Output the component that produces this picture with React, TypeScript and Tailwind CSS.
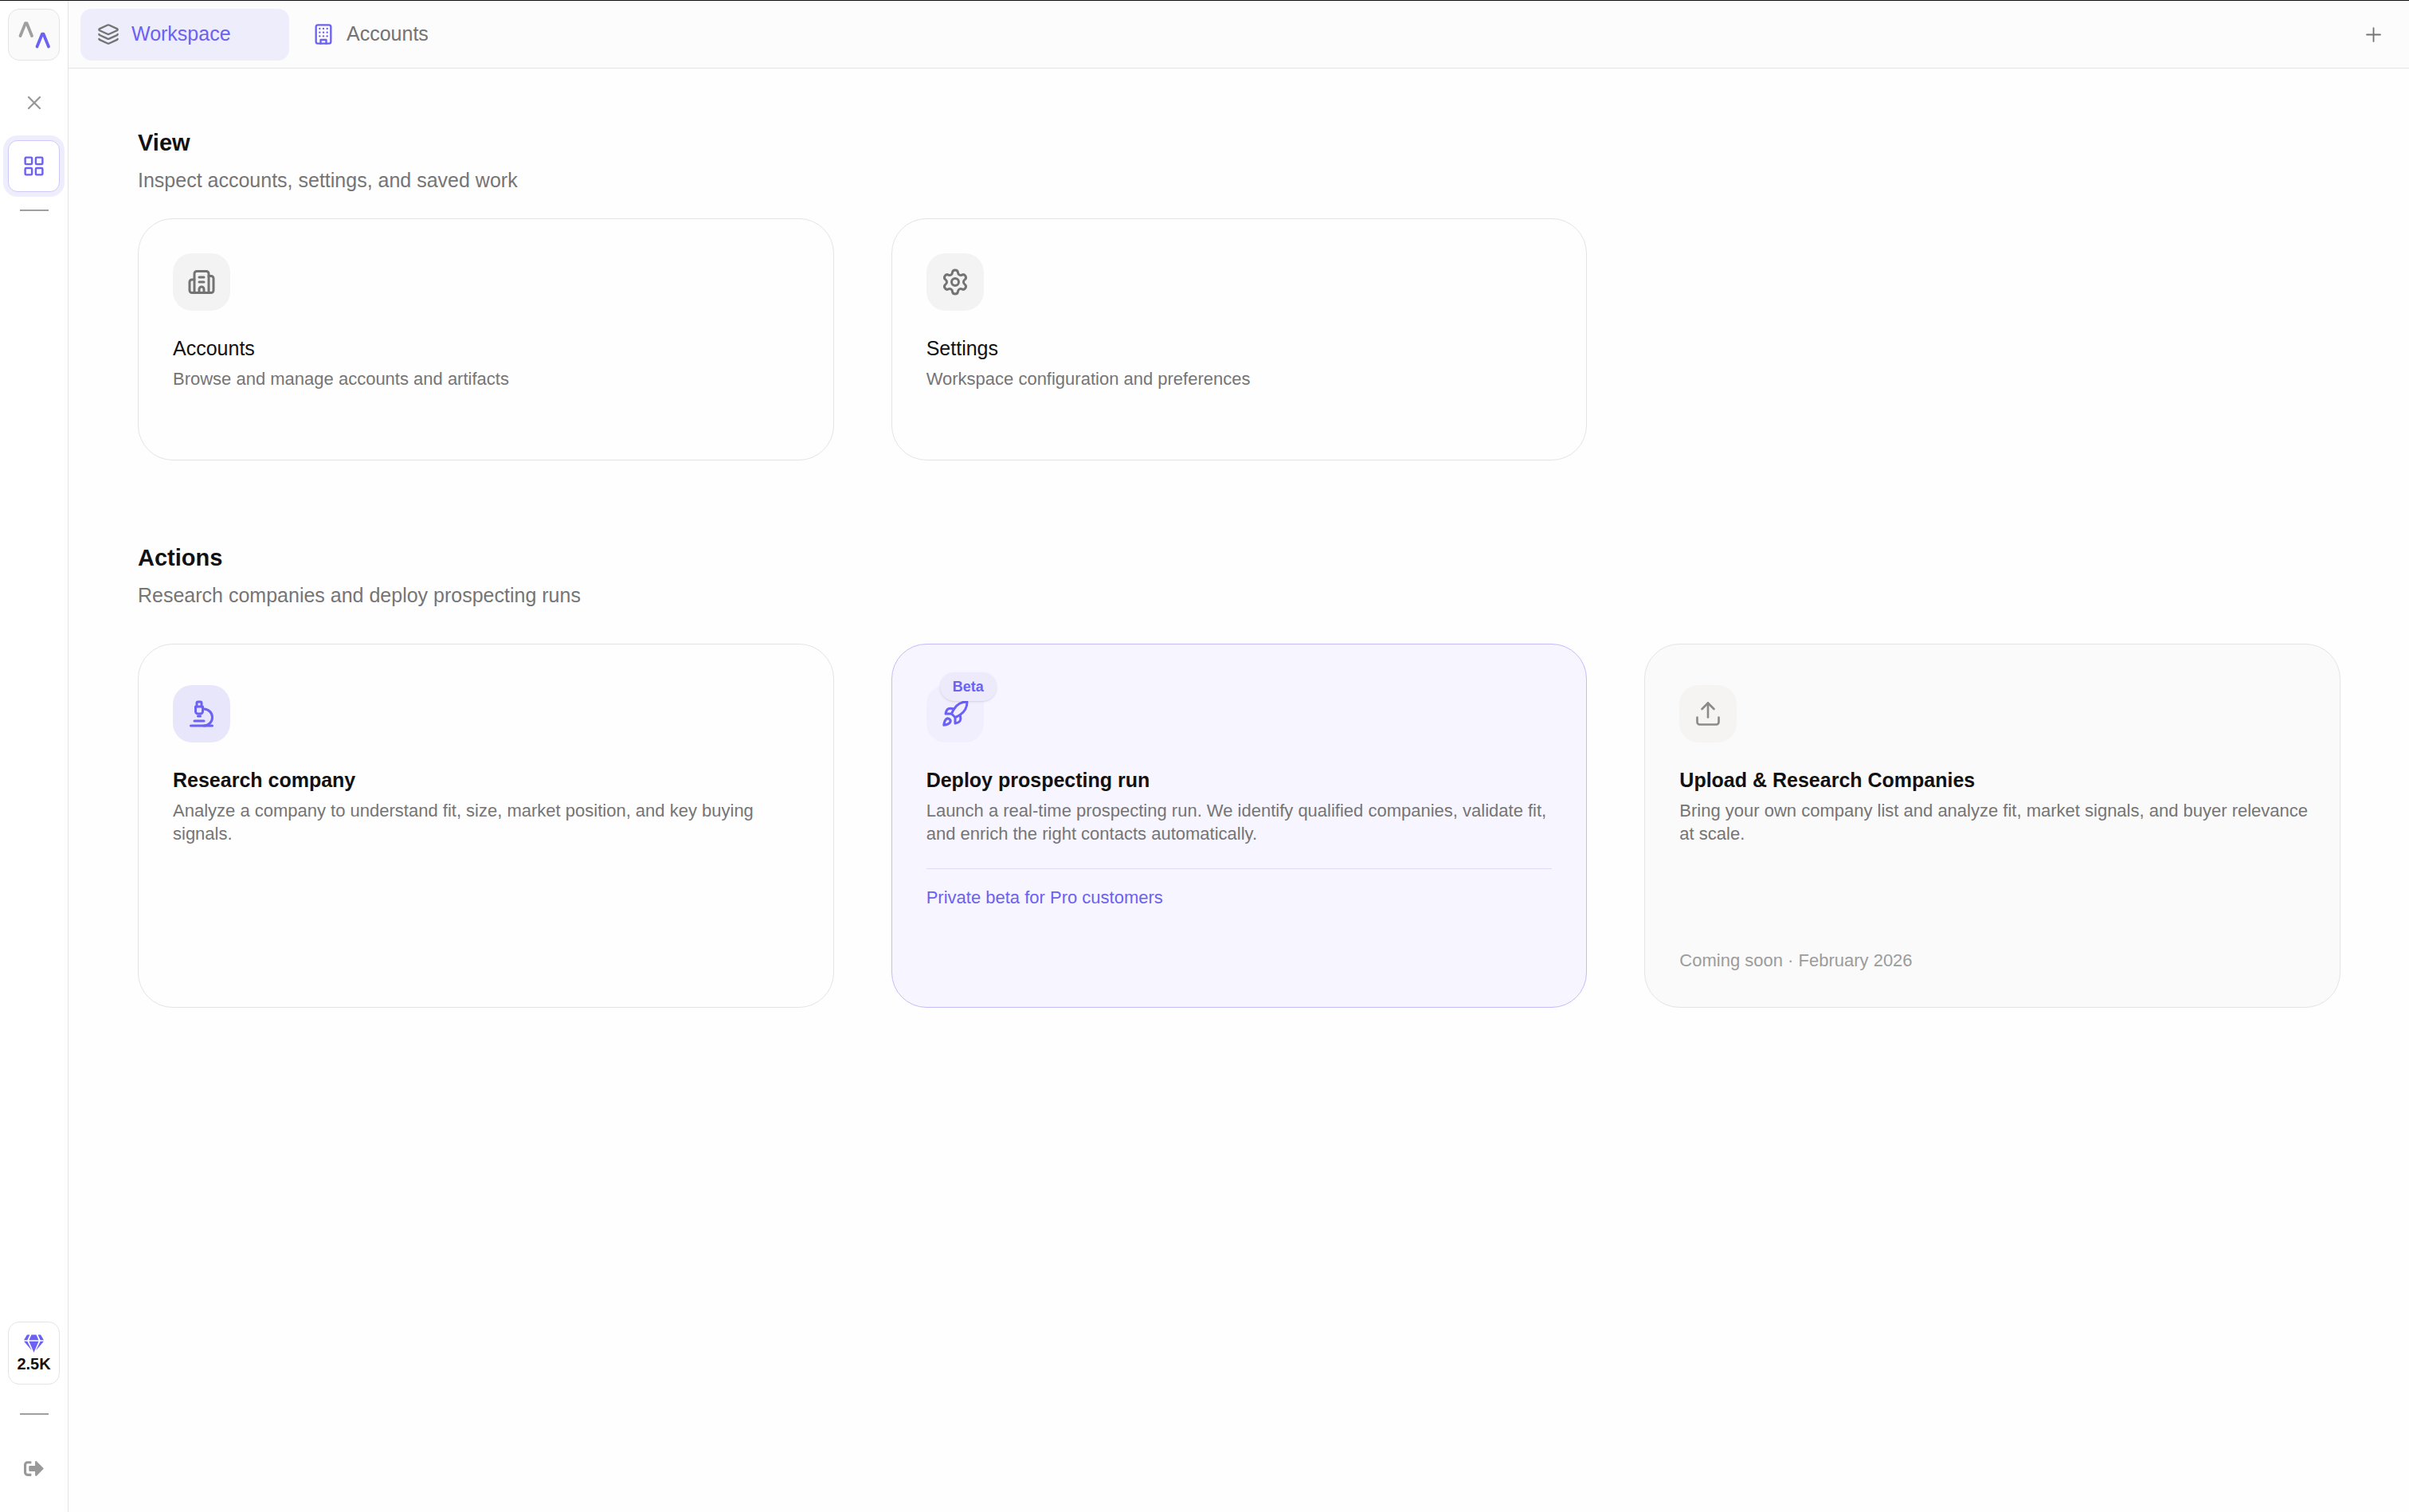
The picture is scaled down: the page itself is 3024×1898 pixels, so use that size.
import type { ReactNode } from "react";
import { Building2, Layers, LayoutGrid, Microscope, Plus, Rocket, Settings, Upload, X } from "lucide-react";
import { FaGem, FaSignOutAlt } from "react-icons/fa";
import { LuBuilding } from "react-icons/lu";

function Logo() {
  return (
    <svg width="42" height="42" viewBox="0 0 42 42" fill="none" strokeLinejoin="round" strokeLinecap="round" aria-hidden="true">
      <path d="M3.5 22 10 6h1.500L18 22" stroke="#9f9f9f" strokeWidth="3.750" />
      <path d="M24.500 35.500l6.500-16h1.500l6.500 16" stroke="#6b61f2" strokeWidth="3.750" />
    </svg>
  );
}

function Tile({ tone, children }: { tone: string; children: ReactNode }) {
  return <div className={`relative flex size-18 items-center justify-center rounded-[24px] ${tone}`}>{children}</div>;
}

function Copy({ title, text, bold }: { title: string; text: string; bold?: boolean }) {
  return (
    <>
      <h3 className={`mt-8 text-[25px] leading-[30px] text-[#111] ${bold ? "font-bold" : ""}`}>{title}</h3>
      <p className="mt-[9px] -mr-2 text-[22px] leading-[29px] text-[#757575]">{text}</p>
    </>
  );
}

function SectionHead({ title, text }: { title: string; text: string }) {
  return (
    <>
      <h2 className="text-[29px] leading-[36px] font-bold text-[#111]">{title}</h2>
      <p className="mt-[13px] text-[25px] leading-[32px] text-[#757575]">{text}</p>
    </>
  );
}

export default function App() {
  return (
    <div className="flex min-h-screen flex-col border-t border-[#111] bg-[#fefefe] font-['Liberation_Sans',Arial,sans-serif]">
      <div className="flex flex-1">
        <aside className="flex w-[86px] shrink-0 flex-col items-center border-r border-[#e4e4e4] bg-white pt-[10px]">
          <a href="#" aria-label="Home" className="flex size-[65px] items-center justify-center rounded-[14px] border border-[#e4e4e4] bg-[#fafafa]">
            <Logo />
          </a>
          <button aria-label="Close" className="mt-[39px] text-[#999]">
            <X size={28} strokeWidth={2} />
          </button>
          <button aria-label="Workspace grid" className="mt-[33px] flex size-[65px] items-center justify-center rounded-[12px] border border-[#cfc9fb] bg-white text-[#6b61f2] ring-6 ring-[#eeedfc]">
            <LayoutGrid size={29} strokeWidth={2} />
          </button>
          <hr className="mt-[22px] h-[2px] w-9 border-0 bg-[#9f9f9f]" />
          <div className="mt-auto flex h-[79px] w-[65px] flex-col items-center rounded-[14px] border border-[#e4e4e4] bg-white pt-[14px]">
            <FaGem size={25} className="text-[#6b61f2]" />
            <span className="mt-[2px] text-[20px] leading-[22px] font-bold text-[#111]">2.5K</span>
          </div>
          <hr className="mt-9 h-[2px] w-9 border-0 bg-[#9f9f9f]" />
          <button aria-label="Sign out" className="mt-[55px] mb-[42px] text-[#999]">
            <FaSignOutAlt size={25} />
          </button>
        </aside>

        <div className="flex min-w-0 flex-1 flex-col">
          <header className="flex h-[85px] items-center justify-between border-b border-[#e4e4e4] bg-[#fcfcfc] pr-[30px] pl-[15px]">
            <nav className="flex items-center text-[25px]">
              <button className="flex h-[65px] w-[262px] items-center gap-[15px] rounded-[14px] bg-[#eeedfc] pl-[21px] text-[#6b61f2]">
                <Layers size={28} strokeWidth={2} className="text-[#737373]" />
                Workspace
              </button>
              <button className="flex h-[65px] items-center gap-[15px] pl-[29px] text-[#737373]">
                <LuBuilding size={28} strokeWidth={2} className="text-[#6b61f2]" />
                Accounts
              </button>
            </nav>
            <button aria-label="New tab" className="text-[#737373]">
              <Plus size={29} strokeWidth={1.5} />
            </button>
          </header>

          <main className="pt-[75px] pr-[86px] pl-[87px]">
            <section>
              <SectionHead title="View" text="Inspect accounts, settings, and saved work" />
              <div className="mt-[32px] grid grid-cols-3 gap-[72px]">
                <button className="flex h-[304px] flex-col rounded-[44px] border border-[#e4e4e4] px-[43px] pt-[43px] text-left">
                  <Tile tone="bg-[#f4f3f4] text-[#737373]">
                    <Building2 size={36} />
                  </Tile>
                  <Copy title="Accounts" text="Browse and manage accounts and artifacts" />
                </button>
                <button className="flex h-[304px] flex-col rounded-[44px] border border-[#e4e4e4] px-[43px] pt-[43px] text-left">
                  <Tile tone="bg-[#f4f3f4] text-[#737373]">
                    <Settings size={36} />
                  </Tile>
                  <Copy title="Settings" text="Workspace configuration and preferences" />
                </button>
              </div>
            </section>

            <section className="mt-[104px]">
              <SectionHead title="Actions" text="Research companies and deploy prospecting runs" />
              <div className="mt-[45px] grid grid-cols-3 gap-[72px]">
                <button className="flex h-[457px] flex-col rounded-[44px] border border-[#e4e4e4] px-[43px] pt-[51px] text-left">
                  <Tile tone="bg-[#e8e6fb] text-[#6b61f2]">
                    <Microscope size={36} />
                  </Tile>
                  <Copy bold title="Research company" text="Analyze a company to understand fit, size, market position, and key buying signals." />
                </button>
                <button className="flex h-[457px] flex-col rounded-[44px] border border-[#c3bcfa] bg-[#f7f5ff] px-[43px] pt-[51px] text-left">
                  <Tile tone="bg-[#f1effd] text-[#6b61f2]">
                    <Rocket size={36} />
                    <span className="absolute -top-4 -right-4 rounded-full bg-[#edebfb] px-4 text-[18px] leading-[36px] font-bold shadow-sm">Beta</span>
                  </Tile>
                  <Copy bold title="Deploy prospecting run" text="Launch a real-time prospecting run. We identify qualified companies, validate fit, and enrich the right contacts automatically." />
                  <span className="mt-[29px] w-full border-t border-[#dedaf8] pt-[21px] text-[22px] leading-[29px] text-[#6b61f2]">Private beta for Pro customers</span>
                </button>
                <button disabled className="flex h-[457px] flex-col rounded-[44px] border border-[#e4e4e4] bg-[#fafafa] px-[43px] pt-[51px] pb-11 text-left">
                  <Tile tone="bg-[#f5f4f3] text-[#8a8a8a]">
                    <Upload size={36} strokeWidth={1.75} />
                  </Tile>
                  <Copy bold title="Upload & Research Companies" text="Bring your own company list and analyze fit, market signals, and buyer relevance at scale." />
                  <span className="mt-auto text-[22px] leading-[29px] text-[#9c9c9c]">Coming soon · February 2026</span>
                </button>
              </div>
            </section>
          </main>
        </div>
      </div>
    </div>
  );
}
